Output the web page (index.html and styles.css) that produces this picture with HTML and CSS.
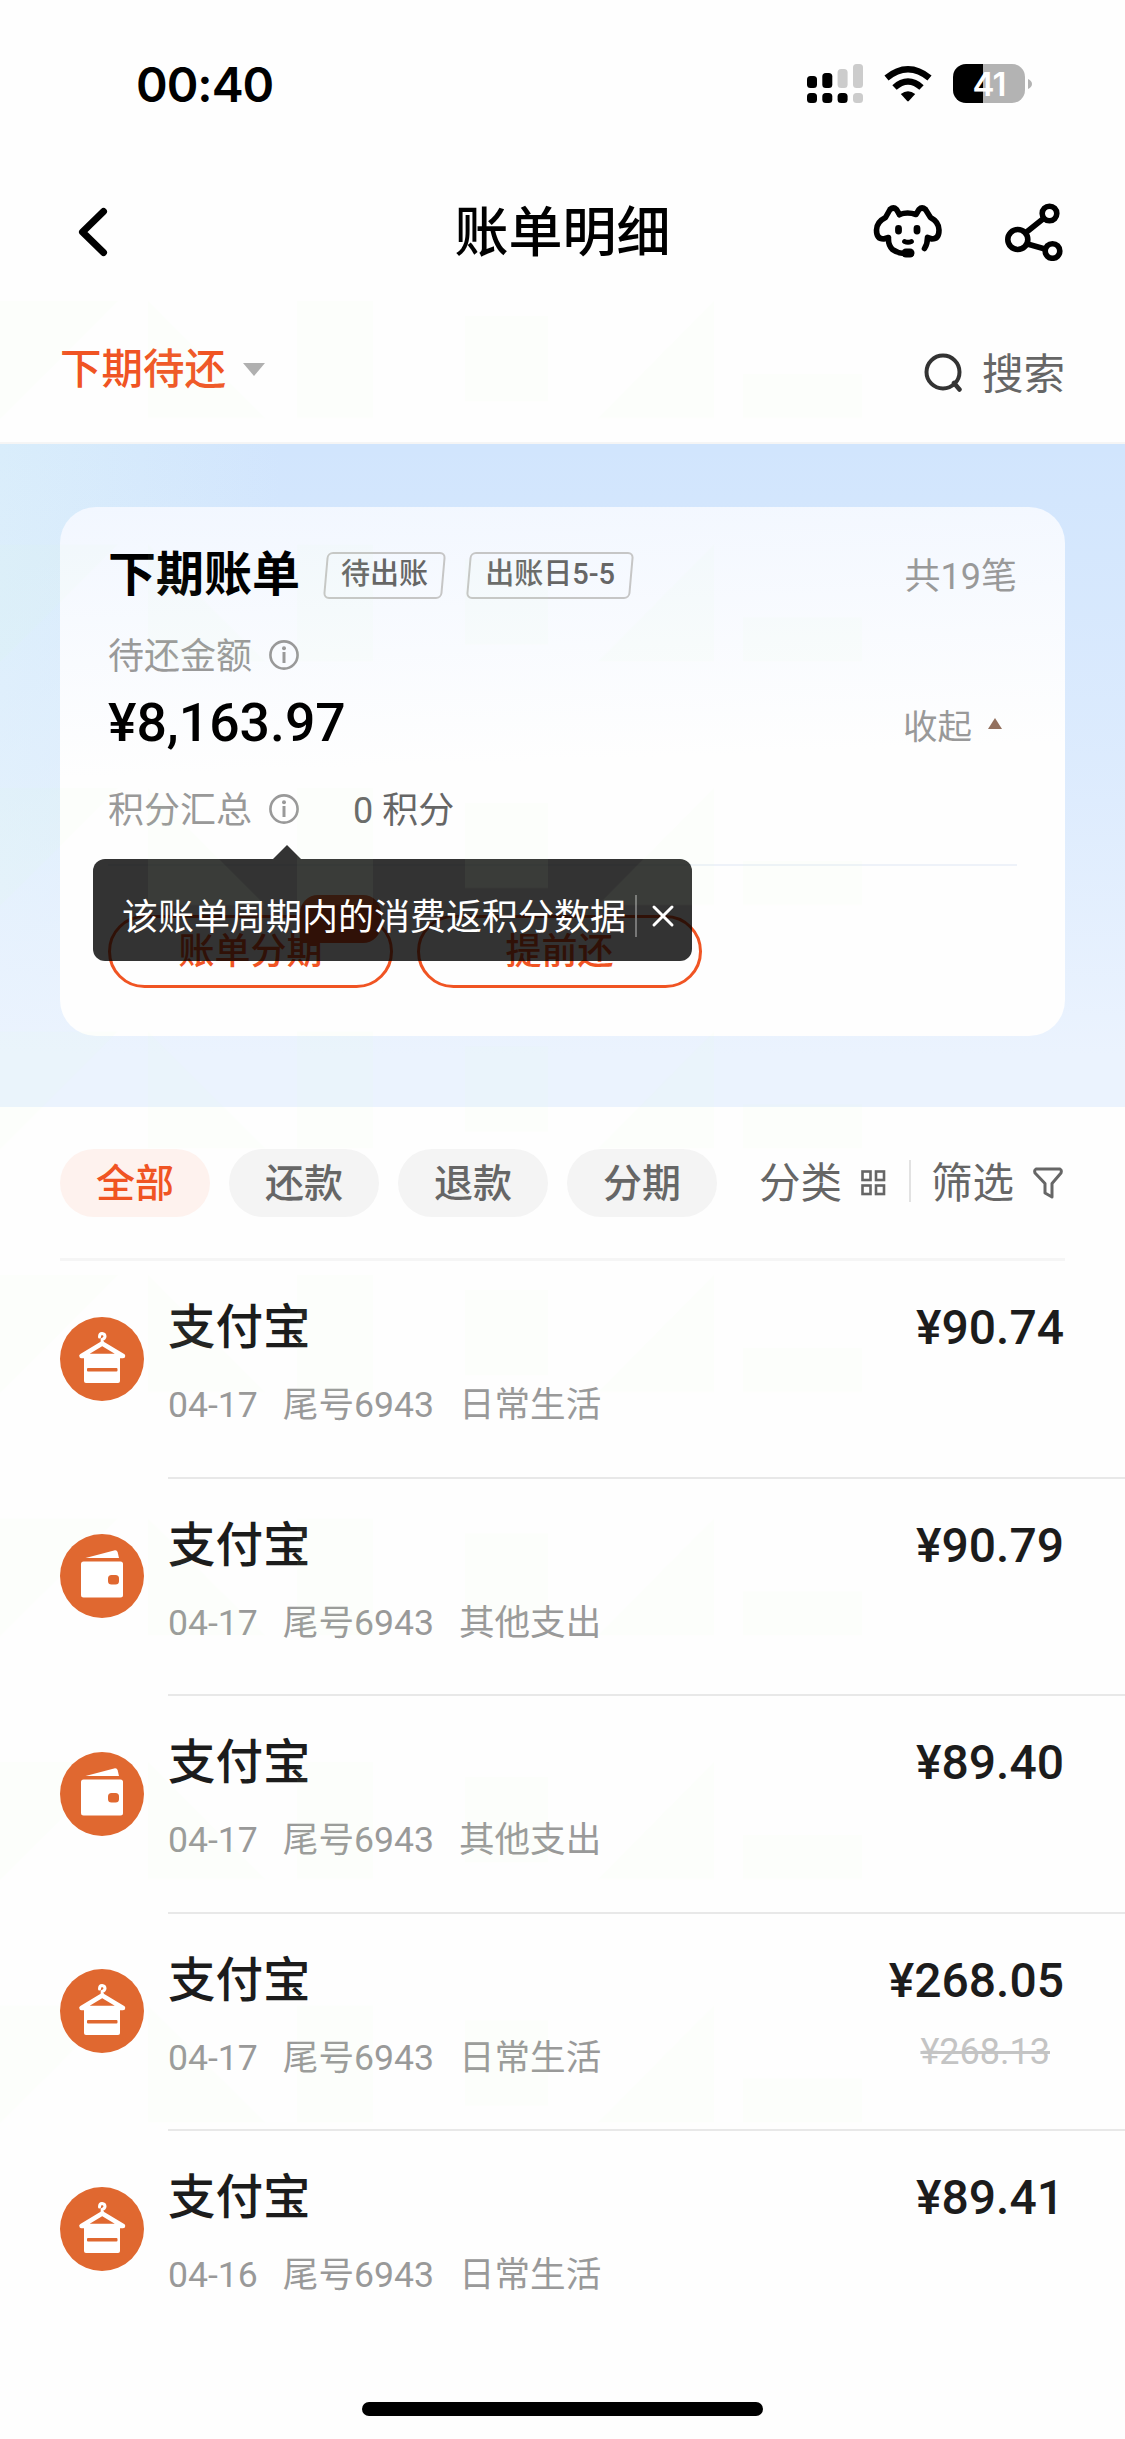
FILE: index.html
```html
<!DOCTYPE html>
<html lang="zh-CN">
<head>
<meta charset="utf-8">
<title>账单明细</title>
<link rel="stylesheet" href="styles.css">
</head>
<body>
<svg class="defs" width="0" height="0" aria-hidden="true">
  <symbol id="info" viewBox="0 0 30 30">
    <circle cx="15" cy="15" r="13.6" fill="none" stroke="#999" stroke-width="2.6"/>
    <circle cx="15" cy="8.2" r="2" fill="#999"/>
    <rect x="13.5" y="12" width="3" height="11" fill="#999"/>
  </symbol>
  <symbol id="hanger" viewBox="0 0 84 84">
    <circle cx="42" cy="42" r="42" fill="#e06830"/>
    <path d="M39.500 20 Q39.500 16.500 42 16.500 Q45 16.800 45 19.500 Q44.800 21.500 42.200 22.500 L42.200 27" fill="none" stroke="#fff" stroke-width="3" stroke-linecap="round"/>
    <path d="M42.200 26.500 L21.500 39 H63 Z" fill="none" stroke="#fff" stroke-width="4.500" stroke-linejoin="round"/>
    <rect x="24" y="38" width="36" height="28" rx="2" fill="#fff"/>
    <rect x="27" y="51" width="30.500" height="3.500" rx="1" fill="#e06830"/>
  </symbol>
  <symbol id="wallet" viewBox="0 0 84 84">
    <circle cx="42" cy="42" r="42" fill="#e06830"/>
    <path d="M25.500 24 L55 16.200 Q57 16 57.600 18 L59 24 Z" fill="#fff"/>
    <rect x="21" y="27.500" width="42" height="36" rx="2.500" fill="#fff"/>
    <rect x="48" y="41" width="11" height="9.500" rx="3.500" fill="#e06830"/>
  </symbol>
</svg>

<div class="screen">
  <header class="status">
    <span class="time">00:40</span>
    <svg class="signal" width="56" height="40" viewBox="0 0 56 40">
      <g fill="#000"><rect x="0" y="12" width="10" height="12" rx="3.500"/><rect x="15.300" y="9" width="10" height="15" rx="3.500"/><rect x="0" y="29" width="10" height="10" rx="3.500"/><rect x="15.300" y="29" width="10" height="10" rx="3.500"/><rect x="30.600" y="29" width="10" height="10" rx="3.500"/></g>
      <g fill="#ccc"><rect x="30.600" y="5" width="10" height="19" rx="3.500"/><rect x="46" y="0" width="10" height="24" rx="3.500"/><rect x="46" y="29" width="10" height="10" rx="3.500"/></g>
    </svg>
    <svg class="wifi" width="48" height="36" viewBox="0 0 48 36">
      <g fill="none" stroke="#000" stroke-width="6.400"><path d="M2.500 12 Q13 3.200 24 3.200 Q35 3.200 45.500 12"/><path d="M10.500 21.500 Q17 15.500 24 15.500 Q31 15.500 37.500 21.500"/></g>
      <path d="M16.800 28 Q24 22.500 31.200 28 L24.800 35 Q24 35.800 23.200 35 Z"/>
    </svg>
    <div class="battery"><span>41</span></div>
    <svg class="nub" width="4" height="12" viewBox="0 0 4 12"><path d="M0 1 Q4 3 4 6 Q4 9 0 11 Z" fill="#b3b3b3"/></svg>
  </header>

  <nav class="nav">
    <svg class="back" width="32" height="50" viewBox="0 0 32 50"><path d="M27.500 4.500 L6.500 25 L27.500 45.500" fill="none" stroke="#000" stroke-width="7" stroke-linecap="round" stroke-linejoin="round"/></svg>
    <h1>账单明细</h1>
    <div class="nav-icons">
      <svg width="70" height="54" viewBox="0 0 70 54" fill="none" stroke="#000" stroke-width="5.600" stroke-linecap="round" stroke-linejoin="round">
        <path d="M26.500 9.500 L23.500 4.500 Q20.500 1.500 17 4.500 L12.500 12.500 Q3.500 17 3.500 25 Q3.500 34 10.500 34 L15.500 32.500 Q15 40 19.500 44.500 Q24 48 31 48.500"/>
        <path d="M26.500 9.500 Q34.500 6.500 43 9.500 L46 4.500 Q49 1.500 52.500 4.500 L57.500 12.500 Q66 17 66 25 Q66 34 59 34 L54.500 32.500 Q54.500 39 51.500 43.500"/>
        <path d="M31.500 36.500 Q35 38 38.500 36.500" stroke-width="4.800"/>
        <path d="M33 48 H37" stroke-width="9"/>
        <path d="M25.500 23.500 V26 M44 23.500 V26" stroke-width="6.800"/>
      </svg>
      <svg width="58" height="58" viewBox="0 0 58 58" fill="none" stroke="#000" stroke-width="5.600">
        <circle cx="12.800" cy="36.500" r="10"/><circle cx="44.500" cy="10.500" r="7.300"/><circle cx="47.500" cy="48" r="7.300"/>
        <path d="M21 29.500 L38.500 15.500 M22.500 41 L40 46"/>
      </svg>
    </div>
  </nav>

  <div class="period">
    <div class="current">下期待还<svg width="22" height="13" viewBox="0 0 22 13"><path d="M0 0 H22 L11 13 Z" fill="#b0b0b0"/></svg></div>
    <div class="search"><svg width="38" height="40" viewBox="0 0 38 40"><circle cx="19" cy="19" r="16.500" fill="none" stroke="#333" stroke-width="4"/><path d="M30 30 L35.500 36.500" stroke="#333" stroke-width="4.500" stroke-linecap="round"/></svg><span>搜索</span></div>
  </div>

  <section class="hero">
    <div class="card">
      <div class="row title-row">
        <h2>下期账单</h2>
        <span class="tag"><b>待出账</b></span>
        <span class="tag wide"><b>出账日5-5</b></span>
        <span class="end">共19笔</span>
      </div>
      <div class="row label-row"><span>待还金额</span><svg width="30" height="30"><use href="#info"/></svg></div>
      <div class="row amount-row">
        <strong>¥8,163.97</strong>
        <span class="end">收起<svg width="14" height="11" viewBox="0 0 14 11"><path d="M7 0 L14 11 H0 Z" fill="#93715f"/></svg></span>
      </div>
      <div class="row points-row"><span>积分汇总</span><svg width="30" height="30"><use href="#info"/></svg><span class="points">0 积分</span></div>
      <div class="actions">
        <span class="pill-btn">账单分期<i class="promo"></i></span>
        <span class="pill-btn">提前还</span>
      </div>
      <div class="tooltip">
        <span>该账单周期内的消费返积分数据</span>
        <i class="sep"></i>
        <svg width="24" height="24" viewBox="0 0 24 24"><path d="M3 3 L21 21 M21 3 L3 21" stroke="#fff" stroke-width="3" stroke-linecap="round"/></svg>
      </div>
    </div>
  </section>

  <div class="filters">
    <span class="chip active">全部</span>
    <span class="chip">还款</span>
    <span class="chip">退款</span>
    <span class="chip">分期</span>
    <div class="tool category"><span>分类</span><svg width="25" height="26" viewBox="0 0 25 26" fill="none" stroke="#666" stroke-width="2.600"><rect x="1.500" y="1.500" width="8" height="8.500"/><rect x="15" y="1.500" width="8" height="8.500"/><rect x="1.500" y="15.500" width="8" height="8.500"/><rect x="15" y="15.500" width="8" height="8.500"/></svg></div>
    <i class="bar"></i>
    <div class="tool"><span>筛选</span><svg width="30" height="32" viewBox="0 0 30 32"><path d="M3 2 H27 Q29 3 28 6 L19 16.500 V30 L12 26 V16.500 L2 6 Q1 3 3 2 Z" fill="none" stroke="#666" stroke-width="3" stroke-linejoin="round"/></svg></div>
  </div>

  <main class="list">
    <article class="item">
      <svg class="avatar"><use href="#hanger"/></svg>
      <div class="body"><div class="info"><h3>支付宝</h3><p><span>04-17</span><span>尾号6943</span><span>日常生活</span></p></div><div class="money">¥90.74</div></div>
    </article>
    <article class="item">
      <svg class="avatar"><use href="#wallet"/></svg>
      <div class="body"><div class="info"><h3>支付宝</h3><p><span>04-17</span><span>尾号6943</span><span>其他支出</span></p></div><div class="money">¥90.79</div></div>
    </article>
    <article class="item">
      <svg class="avatar"><use href="#wallet"/></svg>
      <div class="body"><div class="info"><h3>支付宝</h3><p><span>04-17</span><span>尾号6943</span><span>其他支出</span></p></div><div class="money">¥89.40</div></div>
    </article>
    <article class="item">
      <svg class="avatar"><use href="#hanger"/></svg>
      <div class="body"><div class="info"><h3>支付宝</h3><p><span>04-17</span><span>尾号6943</span><span>日常生活</span></p></div><div class="money">¥268.05<s>¥268.13</s></div></div>
    </article>
    <article class="item">
      <svg class="avatar"><use href="#hanger"/></svg>
      <div class="body"><div class="info"><h3>支付宝</h3><p><span>04-16</span><span>尾号6943</span><span>日常生活</span></p></div><div class="money">¥89.41</div></div>
    </article>
  </main>
  <footer class="home"><i></i></footer>

  <svg class="watermark" width="1125" height="2439">
    <defs>
      <pattern id="mark" width="1125" height="243.500" y="301" patternUnits="userSpaceOnUse">
        <path d="M0 0 H118 L0 118 Z M148 0 L265 117 H148 Z M297 0 H373 V117 H297 Z M465 15 H548 V100 H465 Z M714 0 V117 H598 Z M743 73 H862 V117 H743 Z" fill="#d0ffb0" fill-opacity=".045"/>
      </pattern>
    </defs>
    <rect y="301" width="1125" height="1825" fill="url(#mark)"/>
  </svg>
</div>
</body>
</html>
```
FILE: styles.css
```css
* { box-sizing: border-box; margin: 0; padding: 0; }
body { background: #fff; font-family: Roboto, "Noto Sans CJK SC", sans-serif; }
svg { display: block; flex: none; }
i { font-style: normal; }
.defs { position: absolute; }
.screen { position: relative; width: 1125px; height: 2439px; background: #fefefe; overflow: hidden; display: flex; flex-direction: column; }
.screen > * { flex: none; }
.watermark { position: absolute; left: 0; top: 0; pointer-events: none; }

.status { height: 168px; display: flex; align-items: flex-start; padding: 64px 0 0 136px; }
.time { width: 671px; padding-top: 1px; font: 600 48px/40px Inter, sans-serif; letter-spacing: -1px; color: #000; }
.wifi { margin: 2px 0 0 21px; }
.battery { margin-left: 21px; width: 72px; height: 39px; border-radius: 13px; background: linear-gradient(90deg, #000 30px, #b3b3b3 30px); color: #fff; font: 600 33px/40px Inter, sans-serif; text-align: center; letter-spacing: -1px; }
.nub { margin: 14px 0 0 3px; }

.nav { height: 130px; display: grid; grid-template-columns: 1fr auto 1fr; align-items: center; padding: 0 62px 2px 76px; }
.nav h1 { font-size: 54px; line-height: 80px; font-weight: 500; color: #000; margin-left: -14px; padding-top: 4px; }
.nav-icons { display: flex; justify-content: flex-end; align-items: center; gap: 62px; }

.period { height: 146px; display: flex; justify-content: space-between; padding: 0 60px; border-bottom: 2px solid #f5f5f5; }
.current { height: 144px; display: flex; align-items: center; gap: 17px; font-size: 41.500px; font-weight: 500; color: #f05423; padding-bottom: 8px; }
.current svg { margin-top: 7px; }
.search { height: 144px; display: flex; align-items: center; gap: 20px; font-size: 41.500px; color: #666; padding-top: 6px; }
.search span { margin-top: -4px; }

.hero { height: 663px; padding: 63px 60px 0; background: linear-gradient(180deg, rgba(235,243,254,0) 0, rgba(235,243,254,.45) 50%, #ebf3fe 92%), linear-gradient(90deg, #d9edfb 0, #d1e5fd 25%, #d1e5fd 100%); }
.card { position: relative; height: 529px; border-radius: 36px; background: linear-gradient(178deg, #f2f7ff 0, #fefefe 48%); padding: 38px 48px 0; }
.row { display: flex; align-items: center; }
.end { margin-left: auto; display: flex; align-items: center; font-size: 34.500px; color: #999; }
.title-row { height: 60px; }
.title-row .end { font-size: 36px; padding-bottom: 5px; }
.title-row h2 { font-size: 48px; font-weight: 700; color: #000; line-height: 60px; width: 217px; white-space: nowrap; }
.tag { width: 119px; height: 47px; border: 2px solid #c6c6c6; border-radius: 6px; transform: skewX(-5deg); text-align: center; margin-right: 24px; color: #666; font-size: 29px; line-height: 41px; }
.tag b { display: block; font-weight: 500; transform: skewX(5deg); }
.tag.wide { width: 164px; margin-right: 0; }
.label-row { height: 40px; margin-top: 30px; font-size: 36px; color: #999; gap: 17px; }
.label-row span, .points-row span { margin-top: -5px; }
.amount-row { height: 60px; margin-top: 17px; }
.amount-row strong { font-size: 53.500px; font-weight: 500; color: #000; }
.amount-row .end { padding-right: 15px; gap: 16px; padding-top: 3px; }
.points-row { height: 50px; margin-top: 32px; font-size: 36px; color: #999; gap: 17px; }
.points-row .points { color: #666; margin-left: 37px; }
.actions { margin-top: 30px; border-top: 2px solid #eef2f9; height: 150px; padding-top: 49px; display: flex; gap: 24px; }
.pill-btn { position: relative; width: 285px; height: 73px; border: 3px solid #f05423; border-radius: 37px; color: #f05423; font-size: 36px; font-weight: 500; text-align: center; line-height: 69px; }
.promo { position: absolute; left: 189px; top: -23px; width: 81px; height: 48px; background: #f05423; border-radius: 18px 18px 18px 0; }
.tooltip { position: absolute; left: 33px; top: 352px; width: 599px; height: 102px; background: rgba(0,0,0,.8); border-radius: 12px; display: flex; align-items: center; padding: 12px 0 0 29px; color: #fff; font-size: 36px; }
.tooltip span { width: 506px; white-space: nowrap; margin-top: -4px; }
.tooltip .sep { width: 2px; height: 42px; margin: 0 14px 0 7px; background: #777; }
.tooltip::before { content: ""; position: absolute; left: 180px; top: -14px; border: 14px solid transparent; border-top: 0; border-bottom-color: rgba(0,0,0,.8); }

.filters { height: 154px; margin: 0 60px; border-bottom: 3px solid #f5f5f5; display: flex; align-items: flex-start; padding-top: 42px; }
.chip { width: 150px; height: 68px; margin-right: 19px; border-radius: 34px; background: #f4f4f4; color: #666; text-align: center; font-size: 39px; font-weight: 500; line-height: 70px; }
.chip.active { background: #fef2ee; color: #f05423; }
.tool { display: flex; align-items: center; gap: 19px; height: 68px; font-size: 41.500px; color: #666; }
.tool span { margin-top: -6px; }
.category { margin-left: 23px; }
.bar { width: 2px; height: 42px; margin: 11px 20px 0 23px; background: #e2e2e2; }

.item { display: flex; height: 217.600px; padding-left: 60px; }
.avatar { position: relative; z-index: 1; width: 84px; height: 84px; margin: 55.500px 24px 0 0; }
.body { flex: 1; display: flex; justify-content: space-between; border-bottom: 2px solid #e8e8e8; padding: 37px 61px 0 0; }
.item:last-child .body { border-bottom: 0; }
.info h3 { font-size: 47.500px; line-height: 60px; font-weight: 500; color: #1c1c1c; }
.info p { display: flex; gap: 25px; margin-top: 22px; font-size: 35.600px; line-height: 50px; color: #999; white-space: nowrap; }
.money { display: flex; flex-direction: column; align-items: flex-end; font-size: 48px; line-height: 60px; font-weight: 500; color: #1c1c1c; }
.money s { margin: 16px 14px 0 0; font-size: 36px; line-height: 50px; font-weight: 400; color: #c4c4c4; }
.home { margin-top: auto; height: 37px; }
.home i { display: block; width: 401px; height: 14px; margin: 0 auto; border-radius: 7px; background: #000; }
```
